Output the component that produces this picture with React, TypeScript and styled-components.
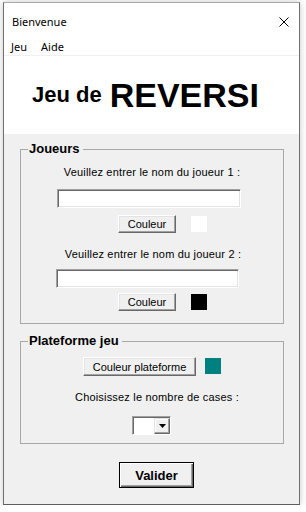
import React from 'react';
import styled, { createGlobalStyle } from 'styled-components';

const GlobalStyle = createGlobalStyle`
  html, body {
    margin: 0;
    background: #ffffff;
  }
  * {
    box-sizing: border-box;
  }
`;

const App = () => {
  return (
    <>
      <GlobalStyle />
      <Window>
        <TitleBar>
          <Title>Bienvenue</Title>
          <CloseIcon width="10" height="10" viewBox="0 0 10 10">
            <path d="M0.5 0.5 L9.5 9.5 M9.5 0.5 L0.5 9.5" stroke="#000" strokeWidth="1" />
          </CloseIcon>
        </TitleBar>
        <MenuBar>
          <MenuItem>Jeu</MenuItem>
          <MenuItem>Aide</MenuItem>
        </MenuBar>
        <Banner>
          <BannerSmall>Jeu de</BannerSmall>
          <BannerBig>REVERSI</BannerBig>
        </Banner>

        <Group $mt={7} $pb={12}>
          <Legend>Joueurs</Legend>
          <Caption $mt={9}>Veuillez entrer le nom du joueur 1 :</Caption>
          <TextInput $mt={10} $indent={36} $width={184} />
          <Row $mt={7} $indent={97} $gap={15}>
            <ClassicButton $width={58} $height={18}>Couleur</ClassicButton>
            <Swatch $color="#ffffff" />
          </Row>
          <Caption $mt={15} $indent={2}>Veuillez entrer le nom du joueur 2 :</Caption>
          <TextInput $mt={8} $indent={35} $width={183} />
          <Row $mt={5} $indent={97} $gap={15}>
            <ClassicButton $width={58} $height={18}>Couleur</ClassicButton>
            <Swatch $color="#000000" />
          </Row>
        </Group>

        <Group $mt={9} $pb={8}>
          <Legend>Plateforme jeu</Legend>
          <Row $mt={8} $indent={62} $gap={9}>
            <ClassicButton $width={113} $height={19}>Couleur plateforme</ClassicButton>
            <Swatch $color="#008080" />
          </Row>
          <Caption $mt={15} $indent={10}>Choisissez le nombre de cases :</Caption>
          <Combo>
            <ComboField />
            <ComboArrow>
              <svg width="7" height="4" viewBox="0 0 7 4">
                <path d="M0 0 H7 L3.5 4 Z" fill="#000" />
              </svg>
            </ComboArrow>
          </Combo>
        </Group>

        <DefaultButton>Valider</DefaultButton>
      </Window>
    </>
  );
};

export default App;

const Window = styled.div`
  width: 297px;
  height: 503px;
  margin: 2px 0 0 3px;
  border: 1px solid;
  border-color: #a8a8a8 #707070 #5e5e5e #707070;
  background: #f0f0f0;
  box-shadow: 0 0 7px rgba(0, 0, 0, 0.22);
  display: flex;
  flex-direction: column;
  font-family: 'Liberation Sans', Arial, sans-serif;
  color: #000;
`;

const TitleBar = styled.div`
  height: 35px;
  background: #fff;
  display: flex;
  justify-content: space-between;
  align-items: flex-start;
  padding: 11px 10px 0 8px;
`;

const Title = styled.span`
  font-family: 'Noto Sans', sans-serif;
  font-size: 11px;
  line-height: 16px;
`;

const CloseIcon = styled.svg`
  margin-top: 3px;
`;

const MenuBar = styled.div`
  height: 18px;
  background: #fff;
  border-bottom: 1px solid #f0f0f0;
  display: flex;
  padding-left: 7px;
  gap: 14px;
`;

const MenuItem = styled.span`
  font-family: 'Noto Sans', sans-serif;
  font-size: 11px;
  line-height: 17px;
`;

const Banner = styled.div`
  height: 78px;
  background: #fff;
  display: flex;
  align-items: center;
  gap: 8px;
  padding-left: 28px;
  font-weight: bold;
`;

const BannerSmall = styled.span`
  font-size: 22px;
`;

const BannerBig = styled.span`
  font-size: 34px;
`;

const Group = styled.fieldset<{ $mt: number; $pb: number }>`
  margin: ${(p) => p.$mt}px 15px 0 16px;
  padding: 0 0 ${(p) => p.$pb}px;
  border: 1px solid #a8a8a8;
  min-width: 0;
`;

const Legend = styled.legend`
  margin-left: 7px;
  padding: 0 3px 0 1px;
  font-size: 13px;
  line-height: 16px;
  font-weight: bold;
`;

const Caption = styled.div<{ $mt: number; $indent?: number }>`
  margin-top: ${(p) => p.$mt}px;
  padding-left: ${(p) => p.$indent ?? 0}px;
  font-size: 11px;
  line-height: 13px;
  letter-spacing: 0.18px;
  text-align: center;
`;

const TextInput = styled.input<{ $mt: number; $indent: number; $width: number }>`
  display: block;
  margin: ${(p) => p.$mt}px 0 0 ${(p) => p.$indent}px;
  width: ${(p) => p.$width}px;
  height: 19px;
  padding: 0 3px;
  background: #fff;
  border: 1px solid;
  border-color: #a0a0a0 #ffffff #ffffff #a0a0a0;
  box-shadow: inset 1px 1px #696969, inset -1px -1px #e3e3e3;
  outline: none;
`;

const Row = styled.div<{ $mt: number; $indent: number; $gap: number }>`
  display: flex;
  align-items: flex-start;
  margin-top: ${(p) => p.$mt}px;
  padding-left: ${(p) => p.$indent}px;
  gap: ${(p) => p.$gap}px;
`;

const ClassicButton = styled.button<{ $width: number; $height: number }>`
  width: ${(p) => p.$width}px;
  height: ${(p) => p.$height}px;
  padding: 0;
  font-family: 'Liberation Sans', Arial, sans-serif;
  font-size: 11px;
  color: #000;
  background: #f0f0f0;
  border: 1px solid;
  border-color: #ffffff #696969 #696969 #ffffff;
  box-shadow: inset -1px -1px #a0a0a0, inset 1px 1px #e3e3e3;
`;

const Swatch = styled.div<{ $color: string }>`
  width: 16px;
  height: 16px;
  margin-top: 1px;
  background: ${(p) => p.$color};
`;

const Combo = styled.div`
  display: flex;
  width: 39px;
  height: 19px;
  margin: 12px 0 0 111px;
  border: 1px solid;
  border-color: #a0a0a0 #ffffff #ffffff #a0a0a0;
  box-shadow: inset 1px 1px #696969;
  background: #fff;
`;

const ComboField = styled.div`
  flex: 1;
`;

const ComboArrow = styled.div`
  width: 16px;
  margin: 1px 0 0 0;
  display: flex;
  align-items: center;
  justify-content: center;
  background: #f0f0f0;
  border: 1px solid;
  border-color: #e3e3e3 #696969 #696969 #e3e3e3;
  box-shadow: inset -1px -1px #a0a0a0, inset 1px 1px #ffffff;
`;

const DefaultButton = styled.button`
  width: 75px;
  height: 26px;
  margin: 18px 0 0 115px;
  padding: 0;
  font-family: 'Liberation Sans', Arial, sans-serif;
  font-size: 13px;
  font-weight: bold;
  color: #000;
  background: #f0f0f0;
  border: 1px solid #000;
  box-shadow: inset 1px 1px #ffffff, inset -1px -1px #696969, inset -2px -2px #a0a0a0;
`;
